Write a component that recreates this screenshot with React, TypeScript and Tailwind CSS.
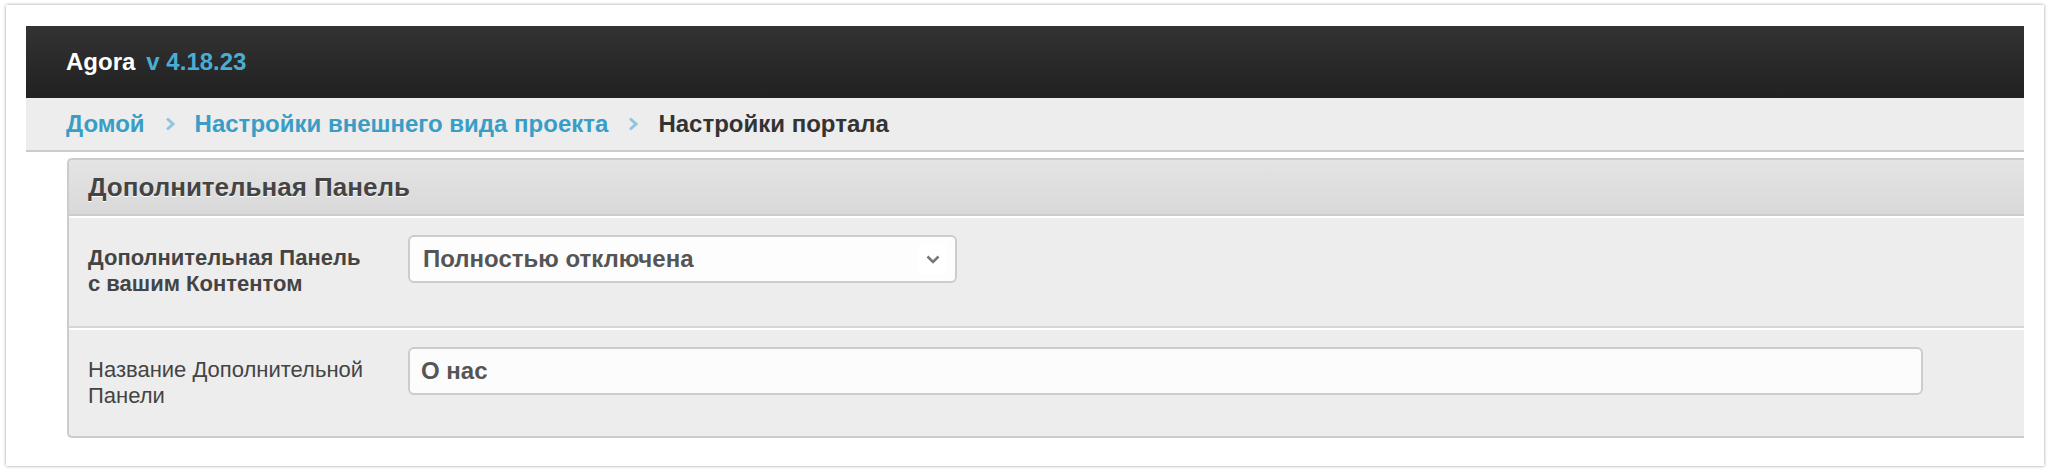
import React from 'react';

const font = { fontFamily: '"Liberation Sans", Arial, sans-serif' };

const Chevron: React.FC = () => (
  <svg width="10" height="14" viewBox="0 0 10 14" className="mx-[20px] shrink-0">
    <polyline points="2,1.5 8,7 2,12.5" fill="none" stroke="#8ec8de" strokeWidth="3" />
  </svg>
);

export default function App() {
  return (
    <div className="bg-white px-[6px] py-[5px]" style={font}>
      <div className="bg-white shadow-[0_0_3px_rgba(0,0,0,0.4)] pt-[21px] px-[20px] pb-[28px]">
        {/* top bar */}
        <div className="h-[72px] bg-gradient-to-b from-[#333333] to-[#212121] flex items-center pl-[40px]">
          <span className="text-[24px] font-bold text-white">Agora</span>
          <span className="ml-[11px] text-[24px] font-bold text-[#4aaed4]">v 4.18.23</span>
        </div>

        {/* breadcrumb */}
        <div className="h-[54px] bg-[#ededed] border-b-2 border-[#cccccc] flex items-center pl-[40px] text-[24px] font-bold">
          <span className="text-[#3a9dc5]">Домой</span>
          <Chevron />
          <span className="text-[#3a9dc5]">Настройки внешнего вида проекта</span>
          <Chevron />
          <span className="text-[#333333]">Настройки портала</span>
        </div>

        {/* panel */}
        <div className="mt-[6px] ml-[41px] border-2 border-r-0 border-[#cccccc] rounded-l-[5px] bg-[#ededed] overflow-hidden">
          <div className="h-[56px] bg-gradient-to-b from-[#e4e4e4] to-[#d9d9d9] border-b-2 border-[#cccccc] flex items-center pl-[19px]">
            <span className="text-[26px] font-bold text-[#444444] [text-shadow:0_1px_0_#ffffff]">
              Дополнительная Панель
            </span>
          </div>

          <div className="h-[112px] border-t-2 border-white border-b-2 border-b-[#d6d6d6] flex items-start pl-[19px] pt-[17px]">
            <div className="w-[320px] mt-[10px] text-[22px] leading-[26px] font-bold text-[#444444]">
              Дополнительная Панель
              <br />с вашим Контентом
            </div>
            <div className="w-[549px] h-[48px] border-2 border-[#cccccc] rounded-[6px] bg-[#fdfdfd] flex items-center justify-between pl-[13px] pr-[8px]">
              <span className="text-[24px] font-bold text-[#555555]">Полностью отключена</span>
              <span className="w-[29px] h-[30px] bg-white rounded-[3px] flex items-center justify-center">
                <svg width="14" height="9" viewBox="0 0 14 9">
                  <polyline points="1.5,1.5 7,7 12.5,1.5" fill="none" stroke="#777777" strokeWidth="2.6" />
                </svg>
              </span>
            </div>
          </div>

          <div className="h-[108px] border-t-2 border-white flex items-start pl-[19px] pt-[17px]">
            <div className="w-[320px] mt-[10px] text-[22px] leading-[26px] text-[#444444]">
              Название Дополнительной
              <br />Панели
            </div>
            <div className="w-[1515px] h-[48px] border-2 border-[#cccccc] rounded-[6px] bg-[#fcfcfc] flex items-center pl-[11px]">
              <span className="text-[24px] font-bold text-[#555555]">О нас</span>
            </div>
          </div>
        </div>
      </div>
    </div>
  );
}
